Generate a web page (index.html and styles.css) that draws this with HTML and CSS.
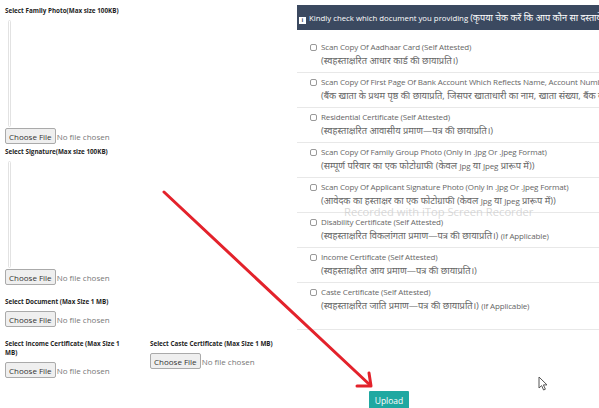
FILE: index.html
```html
<!DOCTYPE html>
<html lang="en">
<head>
  <meta charset="UTF-8">
  <meta name="viewport" content="width=device-width, initial-scale=1.0">
  <title>Upload Documents</title>
  <link rel="stylesheet" href="styles.css">
</head>
<body>

  <div class="page">
    <!-- Upload fields -->
    <div class="uploads">
      <div class="photo-group">
        <label class="field-label" for="family-photo">Select Family Photo(Max size 100KB)</label>
        <div class="preview"></div>
        <input type="file" id="family-photo">
      </div>

      <div class="photo-group">
        <label class="field-label" for="signature">Select Signature(Max size 100KB)</label>
        <div class="preview"></div>
        <input type="file" id="signature">
      </div>

      <div class="doc-group">
        <label class="field-label" for="document">Select Document (Max Size 1 MB)</label>
        <input type="file" id="document">
      </div>

      <div class="doc-row">
        <div class="doc-group doc-half">
          <label class="field-label" for="income">Select Income Certificate (Max Size 1 MB)</label>
          <input type="file" id="income">
        </div>
        <div class="doc-group">
          <label class="field-label" for="caste">Select Caste Certificate (Max Size 1 MB)</label>
          <input type="file" id="caste">
        </div>
      </div>
    </div>

    <!-- Checklist -->
    <div class="checklist">
      <div class="checklist-head">
        <span class="info-icon">i</span>
        Kindly check which document you providing <span class="hi-head" lang="hi">(कृपया चेक करें कि आप कौन सा दस्तावेज़ प्रदान कर रहे हैं)</span>
      </div>
      <ul class="doc-list">
        <li class="doc-item">
          <input type="checkbox" class="doc-check">
          <div class="doc-text">
            <div>Scan Copy Of Aadhaar Card (Self Attested)</div>
            <div class="hi" lang="hi">(स्वहस्ताक्षरित आधार कार्ड की छायाप्रति।)</div>
          </div>
        </li>
        <li class="doc-item">
          <input type="checkbox" class="doc-check">
          <div class="doc-text">
            <div>Scan Copy Of First Page Of Bank Account Which Reflects Name, Account Number, Bank Name And IFSC Code</div>
            <div class="hi" lang="hi">(बैंक खाता के प्रथम पृष्ठ की छायाप्रति, जिसपर खाताधारी का नाम, खाता संख्या, बैंक का नाम, बैंक का <span class="lat">IFSC</span> कोड हो)</div>
          </div>
        </li>
        <li class="doc-item">
          <input type="checkbox" class="doc-check">
          <div class="doc-text">
            <div>Residential Certificate (Self Attested)</div>
            <div class="hi" lang="hi">(स्वहस्ताक्षरित आवासीय प्रमाण—पत्र की छायाप्रति।)</div>
          </div>
        </li>
        <li class="doc-item">
          <input type="checkbox" class="doc-check">
          <div class="doc-text">
            <div>Scan Copy Of Family Group Photo (Only In .Jpg Or .Jpeg Format)</div>
            <div class="hi" lang="hi">(सम्पूर्ण परिवार का एक फोटोग्राफी (केवल <span class="lat">Jpg</span> या <span class="lat">Jpeg</span> प्रारूप में))</div>
          </div>
        </li>
        <li class="doc-item">
          <input type="checkbox" class="doc-check">
          <div class="doc-text">
            <div>Scan Copy Of Applicant Signature Photo (Only In .Jpg Or .Jpeg Format)</div>
            <div class="hi" lang="hi">(आवेदक का हस्ताक्षर का एक फोटोग्राफी (केवल <span class="lat">Jpg</span> या <span class="lat">Jpeg</span> प्रारूप में))</div>
          </div>
        </li>
        <li class="doc-item">
          <input type="checkbox" class="doc-check">
          <div class="doc-text">
            <div>Disability Certificate (Self Attested)</div>
            <div class="hi" lang="hi">(स्वहस्ताक्षरित विकलांगता प्रमाण—पत्र की छायाप्रति।) <span class="lat">(If Applicable)</span></div>
          </div>
        </li>
        <li class="doc-item">
          <input type="checkbox" class="doc-check">
          <div class="doc-text">
            <div>Income Certificate (Self Attested)</div>
            <div class="hi" lang="hi">(स्वहस्ताक्षरित आय प्रमाण—पत्र की छायाप्रति।)</div>
          </div>
        </li>
        <li class="doc-item">
          <input type="checkbox" class="doc-check">
          <div class="doc-text">
            <div>Caste Certificate (Self Attested)</div>
            <div class="hi" lang="hi">(स्वहस्ताक्षरित जाति प्रमाण—पत्र की छायाप्रति।) <span class="lat">(If Applicable)</span></div>
          </div>
        </li>
      </ul>
    </div>
  </div>

  <div class="actions">
    <button class="upload-btn">Upload</button>
  </div>

  <!-- screen recorder overlays -->
  <div class="watermark">Recorded with iTop Screen Recorder</div>
  <svg class="arrow" width="599" height="408" viewBox="0 0 599 408">
    <g stroke="#e3222b" stroke-width="3" fill="none" stroke-linecap="round" stroke-linejoin="round">
      <path d="M164 192 L370 385"/>
      <path d="M357 386 L371 386 L369 373"/>
    </g>
  </svg>
  <svg class="cursor" width="12" height="16" viewBox="0 0 12 16">
    <path d="M1 1 L1 12 L3.6 9.6 L5.6 14 L7.4 13.2 L5.4 8.9 L9 8.9 Z" fill="#fff" stroke="#555" stroke-width="1"/>
  </svg>

</body>
</html>
```

FILE: styles.css
```css
body {
  margin: 0;
  font-family: "Open Sans", "Noto Sans", sans-serif;
  color: #333;
  background: #fff;
  overflow: hidden;
  position: relative;
  height: 408px;
}
.page {
  display: flex;
  padding-top: 5px;
}
.uploads {
  width: 297px;
  flex: none;
  padding-left: 5px;
  box-sizing: border-box;
}
.field-label {
  display: block;
  font-size: 6.3px;
  font-weight: bold;
  line-height: 9px;
  color: #1e1e1e;
  margin-bottom: 5px;
}
.photo-group {
  margin-bottom: 3px;
}
.photo-group .field-label {
  margin-top: 1px;
}
.preview {
  width: 1px;
  height: 105px;
  margin-left: 3px;
  border: 1px solid #e2e2e2;
  border-radius: 2px;
  margin-bottom: 1px;
}
input[type="file"] {
  display: block;
  font-family: "Open Sans", sans-serif;
  font-size: 8px;
  color: #777;
  height: 16px;
}
input[type="file"]::file-selector-button {
  font-family: "Open Sans", sans-serif;
  font-size: 8px;
  color: #333;
  background: #efefef;
  border: 1px solid #aaa;
  border-radius: 2px;
  padding: 1px 3px;
  margin-right: 1px;
  height: 16px;
}
.doc-group {
  margin-top: 12px;
}
.doc-row {
  display: flex;
}
.doc-half {
  width: 145px;
  padding-right: 22px;
  box-sizing: border-box;
}
.checklist {
  width: 420px;
  flex: none;
}
.checklist-head {
  background: #3b4960;
  color: #fff;
  font-size: 7.8px;
  height: 25px;
  line-height: 25px;
  padding-left: 2px;
  white-space: nowrap;
  overflow: hidden;
}
.hi-head {
  font-size: 9.2px;
}
.info-icon {
  display: inline-block;
  width: 7px;
  height: 7px;
  background: #fff;
  color: #3b4960;
  font-size: 6px;
  font-weight: bold;
  line-height: 7px;
  text-align: center;
  vertical-align: -1px;
  margin-right: 1px;
}
.doc-list {
  list-style: none;
  margin: 8px 0 0;
  padding: 0 0 12px;
  border-bottom: 1px solid #e8e8e8;
}
.doc-item {
  display: flex;
  gap: 4px;
  padding: 2px 0 4px 13px;
  border-top: 1px solid #e8e8e8;
  font-size: 8px;
  letter-spacing: -0.15px;
  line-height: 14px;
  color: #666;
  white-space: nowrap;
  overflow: hidden;
}
.doc-item:first-child {
  border-top: none;
}
.hi {
  font-size: 9.3px;
  letter-spacing: 0;
}
.lat {
  font-size: 8px;
  letter-spacing: -0.15px;
}
.doc-check {
  appearance: none;
  width: 7px;
  height: 7px;
  margin: 4px 0 0;
  border: 1px solid #999;
  border-radius: 2px;
  flex: none;
}
.actions {
  display: flex;
  padding-left: 369px;
  margin-top: 13px;
}
.upload-btn {
  font-family: "Open Sans", sans-serif;
  font-size: 8.5px;
  color: #fff;
  background: #1fa8a1;
  border: none;
  border-radius: 1px;
  width: 40px;
  height: 18px;
  padding: 0;
}
.watermark {
  position: absolute;
  left: 344px;
  top: 204px;
  font-size: 11.2px;
  color: rgba(200, 200, 200, 0.7);
  white-space: nowrap;
}
.arrow {
  position: absolute;
  left: 0;
  top: 0;
}
.cursor {
  position: absolute;
  left: 538px;
  top: 376px;
}
```
